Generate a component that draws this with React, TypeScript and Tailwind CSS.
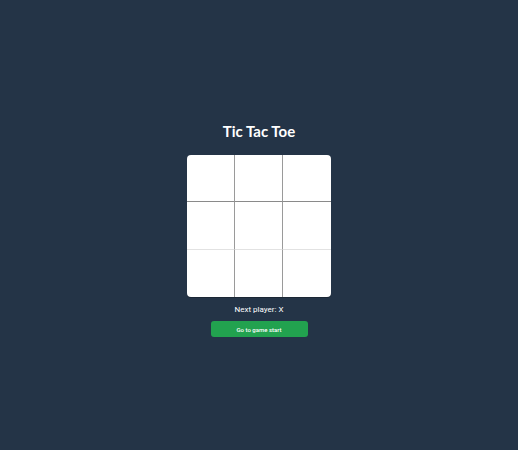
import { useState } from "react";

export default function App() {
  const [squares, setSquares] = useState<(string | null)[]>(Array(9).fill(null));
  const xIsNext = squares.filter(Boolean).length % 2 === 0;

  function play(i: number) {
    if (squares[i]) return;
    const next = squares.slice();
    next[i] = xIsNext ? "X" : "O";
    setSquares(next);
  }

  return (
    <div
      className="flex min-h-screen flex-col items-center bg-[#243447] pt-[121px] text-white"
      style={{ fontFamily: "Lato, 'Open Sans', sans-serif" }}
    >
      <h1 className="text-[15px] font-bold leading-[20px]">Tic Tac Toe</h1>

      <div className="mt-[14px] grid h-[142px] w-[144px] grid-cols-3 grid-rows-3 overflow-hidden rounded-[4px] bg-white shadow-[0_1px_0_rgba(0,0,0,0.25)]">
        {squares.map((v, i) => (
          <button
            key={i}
            onClick={() => play(i)}
            className={`flex items-center justify-center text-2xl font-bold text-[#243447] ${
              i % 3 !== 2 ? "border-r border-r-[#9a9a9a]" : ""
            } ${i < 3 ? "border-b border-b-[#8a8a8a]" : i < 6 ? "border-b border-b-[#e2e2e2]" : ""}`}
          >
            {v}
          </button>
        ))}
      </div>

      <p className="mt-[7px] text-[8px] leading-[12px]" style={{ fontFamily: "Roboto, sans-serif" }}>
        Next player: {xIsNext ? "X" : "O"}
      </p>

      <button
        onClick={() => setSquares(Array(9).fill(null))}
        className="mt-[5px] h-[16px] w-[97px] rounded-[3px] bg-[#22a24f] text-[6px] font-medium text-white"
        style={{ fontFamily: "Roboto, sans-serif" }}
      >
        Go to game start
      </button>
    </div>
  );
}
